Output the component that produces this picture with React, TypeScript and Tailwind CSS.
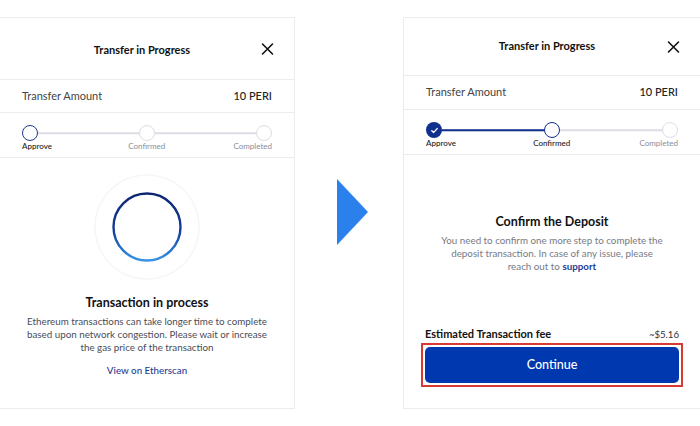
import React from "react";

const font = { fontFamily: "Lato, 'Noto Sans', sans-serif" };

function CloseIcon() {
  return (
    <svg width="13" height="13" viewBox="0 0 13 13" fill="none">
      <path d="M1.5 1.5 L11.5 11.5 M11.5 1.5 L1.5 11.5" stroke="#111" strokeWidth="1.6" strokeLinecap="round" />
    </svg>
  );
}

function Header({ h, pt }: { h: string; pt: string }) {
  return (
    <div className={`relative flex ${h} ${pt} items-center justify-center border-b border-[#ececec]`}>
      <span className="pr-[10px] text-[11px] font-bold text-[#111]">Transfer in Progress</span>
      <div className="absolute right-[20px] top-1/2 -translate-y-1/2 flex">
        <CloseIcon />
      </div>
    </div>
  );
}

function AmountRow({ h }: { h: string }) {
  return (
    <div className={`flex ${h} items-center justify-between border-b border-[#ececec] px-[22px]`}>
      <span className="text-[11px] text-[#444]">Transfer Amount</span>
      <span className="text-[11px] font-medium text-[#222]">10 PERI</span>
    </div>
  );
}

function Stepper({ stage }: { stage: 0 | 1 }) {
  const navy = "#12318f";
  return (
    <div className="border-b border-[#ececec] px-[22px] pt-[12px] pb-[5px]">
      <div className="relative flex items-center justify-between">
        <div className="absolute left-[10px] right-[10px] top-1/2 h-[1.5px] -translate-y-1/2 bg-[#dcdde6]" />
        {stage === 1 && (
          <div className="absolute left-[10px] right-1/2 top-1/2 h-[1.5px] -translate-y-1/2 bg-[#12318f]" />
        )}
        {stage === 0 ? (
          <div className="relative h-[16px] w-[16px] rounded-full border-[1.5px] border-[#1c3a8c] bg-white" />
        ) : (
          <div className="relative flex h-[16px] w-[16px] items-center justify-center rounded-full" style={{ background: navy }}>
            <svg width="9" height="9" viewBox="0 0 9 9" fill="none">
              <path d="M1.8 4.7 L3.7 6.4 L7.2 2.6" stroke="white" strokeWidth="1.4" strokeLinecap="round" strokeLinejoin="round" />
            </svg>
          </div>
        )}
        {stage === 0 ? (
          <div className="relative h-[16px] w-[16px] rounded-full border-[1.5px] border-[#dcdde3] bg-white" />
        ) : (
          <div className="relative h-[16px] w-[16px] rounded-full border-[1.5px] border-[#12318f] bg-white" />
        )}
        <div className="relative h-[16px] w-[16px] rounded-full border-[1.5px] border-[#dcdde3] bg-white" />
      </div>
      <div className="mt-[-1px] flex justify-between text-[8px]">
        <span className="text-[#222] font-medium">Approve</span>
        <span className={stage === 1 ? "text-[#222] font-medium pl-[8px]" : "text-[#8a8e9c] pl-[8px]"}>Confirmed</span>
        <span className="text-[#8a8e9c]">Completed</span>
      </div>
    </div>
  );
}

function Spinner() {
  return (
    <svg width="108" height="108" viewBox="0 0 108 108" fill="none">
      <defs>
        <linearGradient id="ringGrad" x1="0" y1="0" x2="0" y2="1">
          <stop offset="0" stopColor="#0c2670" />
          <stop offset="0.55" stopColor="#143c99" />
          <stop offset="1" stopColor="#3592e6" />
        </linearGradient>
      </defs>
      <circle cx="54" cy="54" r="52" fill="white" stroke="#f5f6f8" strokeWidth="1.5" />
      <circle cx="54" cy="54" r="33.5" stroke="url(#ringGrad)" strokeWidth="2.4" />
    </svg>
  );
}

export default function App() {
  return (
    <div className="flex h-[426px] w-[700px] items-start overflow-hidden bg-white pt-[17px]" style={font}>
      {/* Left card */}
      <div className="ml-[-1px] flex h-[392px] w-[296px] shrink-0 flex-col border border-[#ececec] bg-white">
        <Header h="h-[62px]" pt="pt-[4px]" />
        <AmountRow h="h-[33px]" />
        <Stepper stage={0} />
        <div className="flex flex-col items-center pt-[15px]">
          <Spinner />
          <div className="mt-[13px] text-[12.5px] font-bold text-[#111]">Transaction in process</div>
          <p className="mt-[2px] px-[18px] text-center text-[9.8px] leading-[13px] text-[#4a4d57]">
            Ethereum transactions can take longer time to complete
            <br />
            based upon network congestion. Please wait or increase
            <br />
            the gas price of the transaction
          </p>
          <a className="mt-[9px] text-[9.8px] font-medium text-[#1f3d94]">View on Etherscan</a>
        </div>
      </div>

      {/* Arrow */}
      <div className="flex h-[392px] w-[108px] shrink-0 items-center pl-[42px]">
        <svg width="31" height="66" viewBox="0 0 31 66" className="mt-[-2px]">
          <polygon points="0,0 31,33 0,66" fill="#2c80ec" />
        </svg>
      </div>

      {/* Right card */}
      <div className="flex h-[392px] w-[298px] shrink-0 flex-col border border-[#ececec] bg-white">
        <Header h="h-[58px]" pt="pt-0" />
        <AmountRow h="h-[34px]" />
        <Stepper stage={1} />
        <div className="flex flex-1 flex-col items-center pt-[58px]">
          <div className="text-[12.5px] font-bold text-[#111]">Confirm the Deposit</div>
          <p className="mt-[2px] text-center text-[9.8px] leading-[13px] text-[#777a85]">
            You need to confirm one more step to complete the
            <br />
            deposit transaction. In case of any issue, please
            <br />
            reach out to <span className="font-bold text-[#1f3d94]">support</span>
          </p>
        </div>
        <div className="px-[17px] pb-[21px]">
          <div className="flex items-end justify-between px-[4px] pb-[1px]">
            <span className="text-[11px] font-bold text-[#111]">Estimated Transaction fee</span>
            <span className="text-[9.6px] text-[#333]">~$5.16</span>
          </div>
          <div className="border-2 border-[#d63a30] p-[2px]">
            <button className="flex h-[36px] w-full items-center justify-center rounded-[5px] bg-[#0038b0] text-[12.5px] font-medium text-white">
              Continue
            </button>
          </div>
        </div>
      </div>
    </div>
  );
}
